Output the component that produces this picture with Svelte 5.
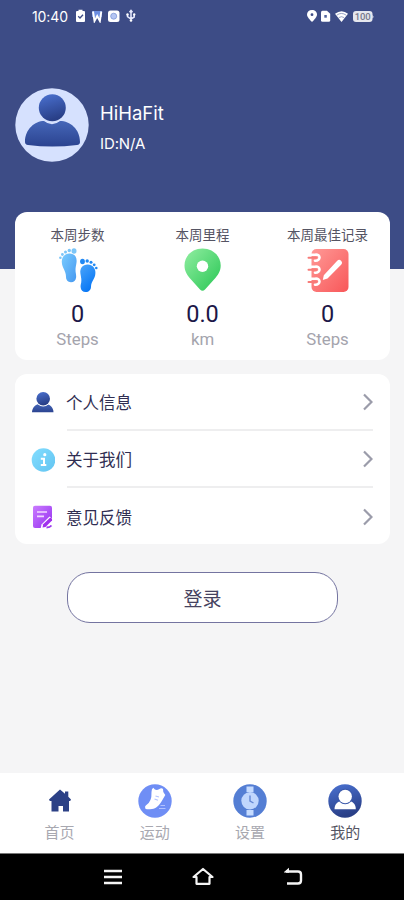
<script>
  const stats = [
    { title: '本周步数', value: '0', unit: 'Steps', icon: 'feet' },
    { title: '本周里程', value: '0.0', unit: 'km', icon: 'pin' },
    { title: '本周最佳记录', value: '0', unit: 'Steps', icon: 'book' }
  ];
  const rows = [
    { label: '个人信息', icon: 'user' },
    { label: '关于我们', icon: 'info' },
    { label: '意见反馈', icon: 'note' }
  ];
  const tabs = [
    { label: '首页', icon: 'home' },
    { label: '运动', icon: 'shoe' },
    { label: '设置', icon: 'watch' },
    { label: '我的', icon: 'me', active: true }
  ];
</script>

<div class="screen">
  <svg class="defs" width="0" height="0" aria-hidden="true">
    <defs>
      <linearGradient id="navy" x1="0" y1="0" x2="0.3" y2="1"><stop offset="0" stop-color="#4b72d2" /><stop offset="1" stop-color="#293f87" /></linearGradient>
      <linearGradient id="torso" x1="0" y1="0" x2="0" y2="1"><stop offset="0" stop-color="#4566b8" /><stop offset="1" stop-color="#2b4390" /></linearGradient>
      <linearGradient id="sky" x1="0" y1="0" x2="1" y2="1"><stop offset="0" stop-color="#7accff" /><stop offset="1" stop-color="#4598f0" /></linearGradient>
      <linearGradient id="azure" x1="0" y1="0" x2="0.5" y2="1"><stop offset="0" stop-color="#4ba5fa" /><stop offset="1" stop-color="#0877f5" /></linearGradient>
      <linearGradient id="green" x1="0" y1="0" x2="1" y2="1"><stop offset="0" stop-color="#91eea1" /><stop offset="1" stop-color="#28c654" /></linearGradient>
      <linearGradient id="coral" x1="0" y1="0" x2="1" y2="1"><stop offset="0" stop-color="#ff9996" /><stop offset="1" stop-color="#f85759" /></linearGradient>
      <linearGradient id="purple" x1="0" y1="0" x2="1" y2="1"><stop offset="0" stop-color="#ca7cff" /><stop offset="1" stop-color="#9530ef" /></linearGradient>
      <linearGradient id="cyan" x1="0" y1="0" x2="1" y2="1"><stop offset="0" stop-color="#83ddff" /><stop offset="1" stop-color="#62c4f1" /></linearGradient>
    </defs>
  </svg>

  <header>
    <div class="status">
      <span class="time">10:40</span>
      <svg class="left-icons" width="62" height="14" viewBox="0 0 62 14">
        <path d="M1 3q0-1 1-1h1.500V.8h4V2H9q1 0 1 1v9q0 1-1 1H2q-1 0-1-1z" fill="#fff" />
        <path d="M3.200 7.300 5 9l3-3.300" fill="none" stroke="#3d4c86" stroke-width="1.300" />
        <path d="M17 2h10v6H17z" fill="#6b8de0" />
        <path d="M18 2.500 19.500 12l2.700-5 2.700 5L26.300 2.500" fill="none" stroke="#fff" stroke-width="1.900" />
        <rect x="33" y="1.500" width="11.500" height="11.500" rx="2.500" fill="#fff" />
        <circle cx="38.700" cy="7.200" r="3" fill="#b5c6f3" stroke="#7e97d4" stroke-width=".8" />
        <path d="M56 2v10M52.500 5.500v2L56 10l3.200-2V5.500M54.500 3.200 56 1.500l1.500 1.700" fill="none" stroke="#e7eaff" stroke-width="1.500" />
        <circle cx="56" cy="11.500" r="1.300" fill="#fff" /><circle cx="52.500" cy="5.500" r="1.200" fill="#fff" /><circle cx="59.200" cy="5.500" r="1.200" fill="#fff" />
      </svg>
      <svg class="right-icons" width="70" height="14" viewBox="0 0 70 14">
        <path d="M6 1c-3 0-5 2-5 4.600C1 8.700 6 13 6 13s5-4.300 5-7.400C11 3 9 1 6 1z" fill="#fff" />
        <circle cx="6" cy="5.700" r="1.400" fill="#3d4c86" />
        <path d="M15 3.200q0-1.500 1.500-1.500H21l3.200 3v6.600q0 1.500-1.500 1.500h-6.200q-1.500 0-1.500-1.500z" fill="#fff" />
        <path d="M18.300 6h2.500v2.700h-2.500z" fill="#52639d" />
        <path d="M29 4.800q6.600-5.200 13 0L35.500 13z" fill="#fff" />
        <path d="M30.700 6.200q4.800-3.500 9.500 0M32.800 8.600q2.700-1.800 5.300 0" fill="none" stroke="#6f7dac" stroke-width=".7" />
        <rect x="47" y="2" width="19.500" height="11" rx="3" fill="#e5e7ee" />
        <path d="M66.500 5.500q1.700 2 0 4z" fill="#fff" />
        <text x="56.700" y="11" text-anchor="middle" font-size="9.500" font-weight="500" fill="#77798c" textLength="16">100</text>
      </svg>
    </div>
    <div class="profile">
      <svg width="74" height="74" viewBox="0 0 74 74">
        <circle cx="37" cy="37" r="36.700" fill="#d6e1fe" />
        <path d="M10 54C10 41 20 33 29 33q8 6.500 16 0c10 0 20 8 20 21q0 2.500-3 3-25 3-49 0-3-.5-3-3z" fill="url(#torso)" />
        <circle cx="37.300" cy="19.500" r="15.300" fill="#d6e1fe" />
        <circle cx="37.300" cy="19.700" r="13.500" fill="url(#navy)" />
      </svg>
      <div class="names"><div class="name">HiHaFit</div><div class="uid">ID:N/A</div></div>
    </div>
  </header>

  <main>
    <section class="stats">
      {#each stats as s}
        <div class="stat">
          <div class="title">{s.title}</div>
          <svg width="46" height="46" viewBox="0 0 46 46">
            {#if s.icon === 'feet'}
              <path d="M6.800 15c-.3-5 3-8.400 7.500-8.600 5-.2 8 3.600 7.200 9-.6 4-1.300 6.500-.8 10 .2 1.500.6 3 .4 5-.3 3-2.300 4.800-5.100 4.800-3.200 0-5-2.200-5-5.400 0-6.500-4-8.500-4.200-14.800z" fill="url(#sky)" />
              <g fill="#7cc6f8"><ellipse cx="19" cy="4" rx="2.500" ry="2.800" /><circle cx="14.300" cy="3.500" r="1.700" /><circle cx="10.500" cy="5" r="1.500" /><circle cx="7.400" cy="7.500" r="1.400" /><circle cx="5.400" cy="10.800" r="1.300" /></g>
              <path d="M40.400 26c.3-5-3-8.400-7.500-8.600-5-.2-8.300 3.600-7.500 9 .6 4 1.300 5.500.8 9-.2 1.500-.7 2.500-.6 4.500.2 3.200 2.200 5.100 5 5.200 3.200.1 5.300-2.100 5.400-5.300.2-6 4.200-7.500 4.400-13.800z" fill="url(#azure)" />
              <g fill="#2189f4"><ellipse cx="27.500" cy="14.500" rx="2.400" ry="2.700" /><circle cx="32.200" cy="14" r="1.700" /><circle cx="36" cy="15.300" r="1.500" /><circle cx="39.200" cy="17.800" r="1.400" /><circle cx="41.300" cy="21" r="1.300" /></g>
            {:else if s.icon === 'pin'}
              <path d="M22.500 1.500C12 1.500 4.500 9 4.500 18.500c0 6 3 10.300 6.500 14l9 10q2.500 2.700 5 0l9-10c4-4.200 6.700-8.300 6.700-14C40.700 9 33 1.500 22.500 1.500z" fill="url(#green)" />
              <circle cx="22.500" cy="19.200" r="5.700" fill="#fff" />
            {:else}
              <rect x="6.500" y="2" width="37" height="43" rx="5" fill="url(#coral)" />
              <g fill="none" stroke-linecap="round">
                <path d="M6 7.700h4c6-1 6 6.500 0 6M6 19.700h4c6-1 6 6.500 0 6M6 31.700h4c6-1 6 6.500 0 6" stroke="#fff" stroke-width="2.600" />
                <path d="M3.500 10.700h7.500M3.500 22.800h7.500M3.500 35h7.500" stroke="#f77b78" stroke-width="2" />
              </g>
              <path d="m17.800 33 1-4.700L32 14.100q2-2.300 4-.4 2 2 .1 4L22.500 31.500z" fill="#fff" />
            {/if}
          </svg>
          <div class="value">{s.value}</div>
          <div class="unit">{s.unit}</div>
        </div>
      {/each}
    </section>

    <section class="list">
      {#each rows as r}
        <div class="row">
          <svg width="24" height="24" viewBox="0 0 24 24">
            {#if r.icon === 'user'}
              <path d="M1 21.300c0-5 4-8 8-8.500h5.500c4 .5 8 3.500 8 8.500z" fill="url(#torso)" />
              <circle cx="12.200" cy="8" r="7.500" fill="#fff" /><circle cx="12.200" cy="7.700" r="6.800" fill="url(#navy)" />
            {:else if r.icon === 'info'}
              <circle cx="12.500" cy="12" r="11.800" fill="url(#cyan)" />
              <circle cx="13.800" cy="6.700" r="1.600" fill="#fff" /><path d="M9.800 10.700h3.200v6M9.800 17h5.500" fill="none" stroke="#fff" stroke-width="2" />
            {:else}
              <path d="M2 2.500Q2 .8 4 .8h15q2 0 2 2v10L12 23H4q-2 0-2-2z" fill="url(#purple)" />
              <path d="M6 7h10M6 11.300h7" stroke="#f2d9ff" stroke-width="1.700" />
              <path d="m9.500 24 1-4.500 8-8 4 3.500-7 8.500z" fill="#fff" />
              <path d="m11.500 22.500.7-3.200 6.800-6.500q2.500.3 2 2.700l-6.500 6.500z" fill="#a12fee" />
              <path d="M15.500 22.500q3.500 0 5-2" fill="none" stroke="#9b35ee" stroke-width="1.800" />
            {/if}
          </svg>
          <div class="body">
            <span>{r.label}</span>
            <svg class="chev" width="11" height="18" viewBox="0 0 11 18"><path d="m2 1.500 7.500 7.500L2 16.500" fill="none" stroke="#9b9caa" stroke-width="2.200" /></svg>
          </div>
        </div>
      {/each}
    </section>

    <button>登录</button>
  </main>

  <nav>
    {#each tabs as t}
      <div class="tab" class:active={t.active}>
        <svg width="34" height="34" viewBox="0 0 34 34">
          {#if t.icon === 'home'}
            <path d="M17 5.500 22 9.800V7.500h3.300v5.200L28 15.500l-.8 1.500H26v10.500h-6v-5.500h-4.500v5.500H8.500V17H6.800L6 15.500z" fill="#2c4186" />
          {:else if t.icon === 'shoe'}
            <circle cx="17" cy="17" r="16.700" fill="#6f8ef5" />
            <path d="M13.500 8q0-3.500 1.800-4.300Q17.500 7 21 5.300q2.500-1.800 4-.3-.5 3.300 2.300 6l-3.500 6c-3 5-5.500 7.300-9.800 8-5 .8-6.700 0-6.700-.8q-.8-1.500.5-2.700Q14 18 13.500 8z" fill="#fff" />
            <path d="m17.500 12 3.500 1M16.500 15l3.500 1.200M22.500 21.500h4.500M21 24.500h6.500" stroke="#b2c2ff" stroke-width="1.200" />
          {:else if t.icon === 'watch'}
            <circle cx="17" cy="17" r="16.700" fill="#547ed4" />
            <path d="M13.500 2.500h7V8h-7zM13.500 26h7v5.500h-7z" fill="#c5dbff" />
            <circle cx="17" cy="16.800" r="8.700" fill="#c0d6fd" />
            <path d="M17 11.500V17l3.500 2" fill="none" stroke="#6487d4" stroke-width="1.400" />
          {:else}
            <circle cx="17" cy="17" r="16.700" fill="url(#navy)" />
            <path d="M6.500 25.200c0-5 3-7.700 7-8.200h7.500c4 .5 6.800 3.200 6.800 8.200z" fill="#fff" />
            <circle cx="17.200" cy="12.500" r="7.700" fill="#3a58aa" /><circle cx="17.200" cy="12.500" r="6.700" fill="#fff" />
          {/if}
        </svg>
        <span>{t.label}</span>
      </div>
    {/each}
  </nav>

  <footer>
    <svg width="18" height="18" viewBox="0 0 18 18"><path d="M0 3h18M0 9h18M0 15h18" stroke="#f4f4f4" stroke-width="2.500" /></svg>
    <svg width="24" height="20" viewBox="0 0 24 20"><path d="m12 2 9.500 8H18.500v6.800h-13V10h-3z" fill="none" stroke="#f4f4f4" stroke-width="2.200" stroke-linejoin="round" /></svg>
    <svg width="20" height="20" viewBox="0 0 20 20"><path d="M2 4.500h12q3 0 3 3v6q0 3-3 3H3" fill="none" stroke="#f4f4f4" stroke-width="2.400" /><path d="M-.5 5.500 5 .8v5z" fill="#f4f4f4" /></svg>
  </footer>
</div>

<style>
  .screen {
    width: 404px;
    height: 900px;
    display: flex;
    flex-direction: column;
    overflow: hidden;
    background: #f5f5f6;
    font-family: 'Noto Sans CJK SC', sans-serif;
    color: #302e52;
  }
  .defs { position: absolute; }
  svg { display: block; flex: none; }
  header { height: 269px; flex: none; background: #3d4c86; color: #fff; }
  .status { height: 32px; display: flex; align-items: center; padding: 0 28px 0 32px; }
  .time { font: 14px Inter, sans-serif; width: 43px; letter-spacing: -0.1px; white-space: nowrap; }
  .right-icons { margin-left: auto; }
  .right-icons text { font-family: Roboto, sans-serif; }
  .profile { display: flex; align-items: center; margin-top: 56px; padding-left: 15px; gap: 11px; }
  .names { font-family: Inter, sans-serif; padding-top: 5px; }
  .name { font-size: 18.500px; line-height: 24px; }
  .uid { font-size: 15px; line-height: 20px; margin-top: 9px; letter-spacing: -0.1px; }
  main { flex: 1; display: flex; flex-direction: column; margin-top: -57px; padding: 0 14px 0 15px; }
  .stats { height: 148px; display: flex; background: #fff; border-radius: 12px; }
  .stat { flex: 1; display: flex; flex-direction: column; align-items: center; padding-top: 12px; }
  .title { font-size: 13.500px; line-height: 20px; margin-bottom: 3px; color: #555463; }
  .value { font-family: Roboto, sans-serif; font-size: 23.500px; line-height: 28px; margin-top: 7px; color: #1c1748; }
  .unit { font-family: Roboto, sans-serif; font-size: 16.800px; line-height: 20px; margin-top: 1px; color: #a4a4ad; }
  .list { height: 170px; margin-top: 14px; background: #fff; border-radius: 12px; padding: 0 17px 0 16px; box-sizing: border-box; }
  .row { height: 57px; display: flex; align-items: center; gap: 12px; }
  .body { flex: 1; height: 57px; box-sizing: border-box; display: flex; align-items: center; justify-content: space-between; border-bottom: 2px solid #eeeeef; padding-top: 1px; font-size: 16.500px; }
  .body span { margin-left: -1px; }
  .row:last-child .body { border: 0; padding: 0; }
  button { width: 271px; height: 51px; margin: 28px 0 0 52px; border: 1px solid #7474a0; border-radius: 23px; background: #fff; color: #454260; font: 19px 'Noto Sans CJK SC', sans-serif; padding: 0; }
  nav { height: 80px; flex: none; display: flex; background: #fff; padding: 0 11px 0 12px; }
  .tab { flex: 1; display: flex; flex-direction: column; align-items: center; padding-top: 11px; font-size: 15px; line-height: 22px; color: #a8a8b0; }
  .tab span { margin-top: 3px; }
  .tab.active { color: #555563; }
  footer { height: 46px; flex: none; display: flex; justify-content: center; align-items: center; gap: 69px; padding-left: 3px; background: #000; border-top: 1px solid #777; }
</style>
